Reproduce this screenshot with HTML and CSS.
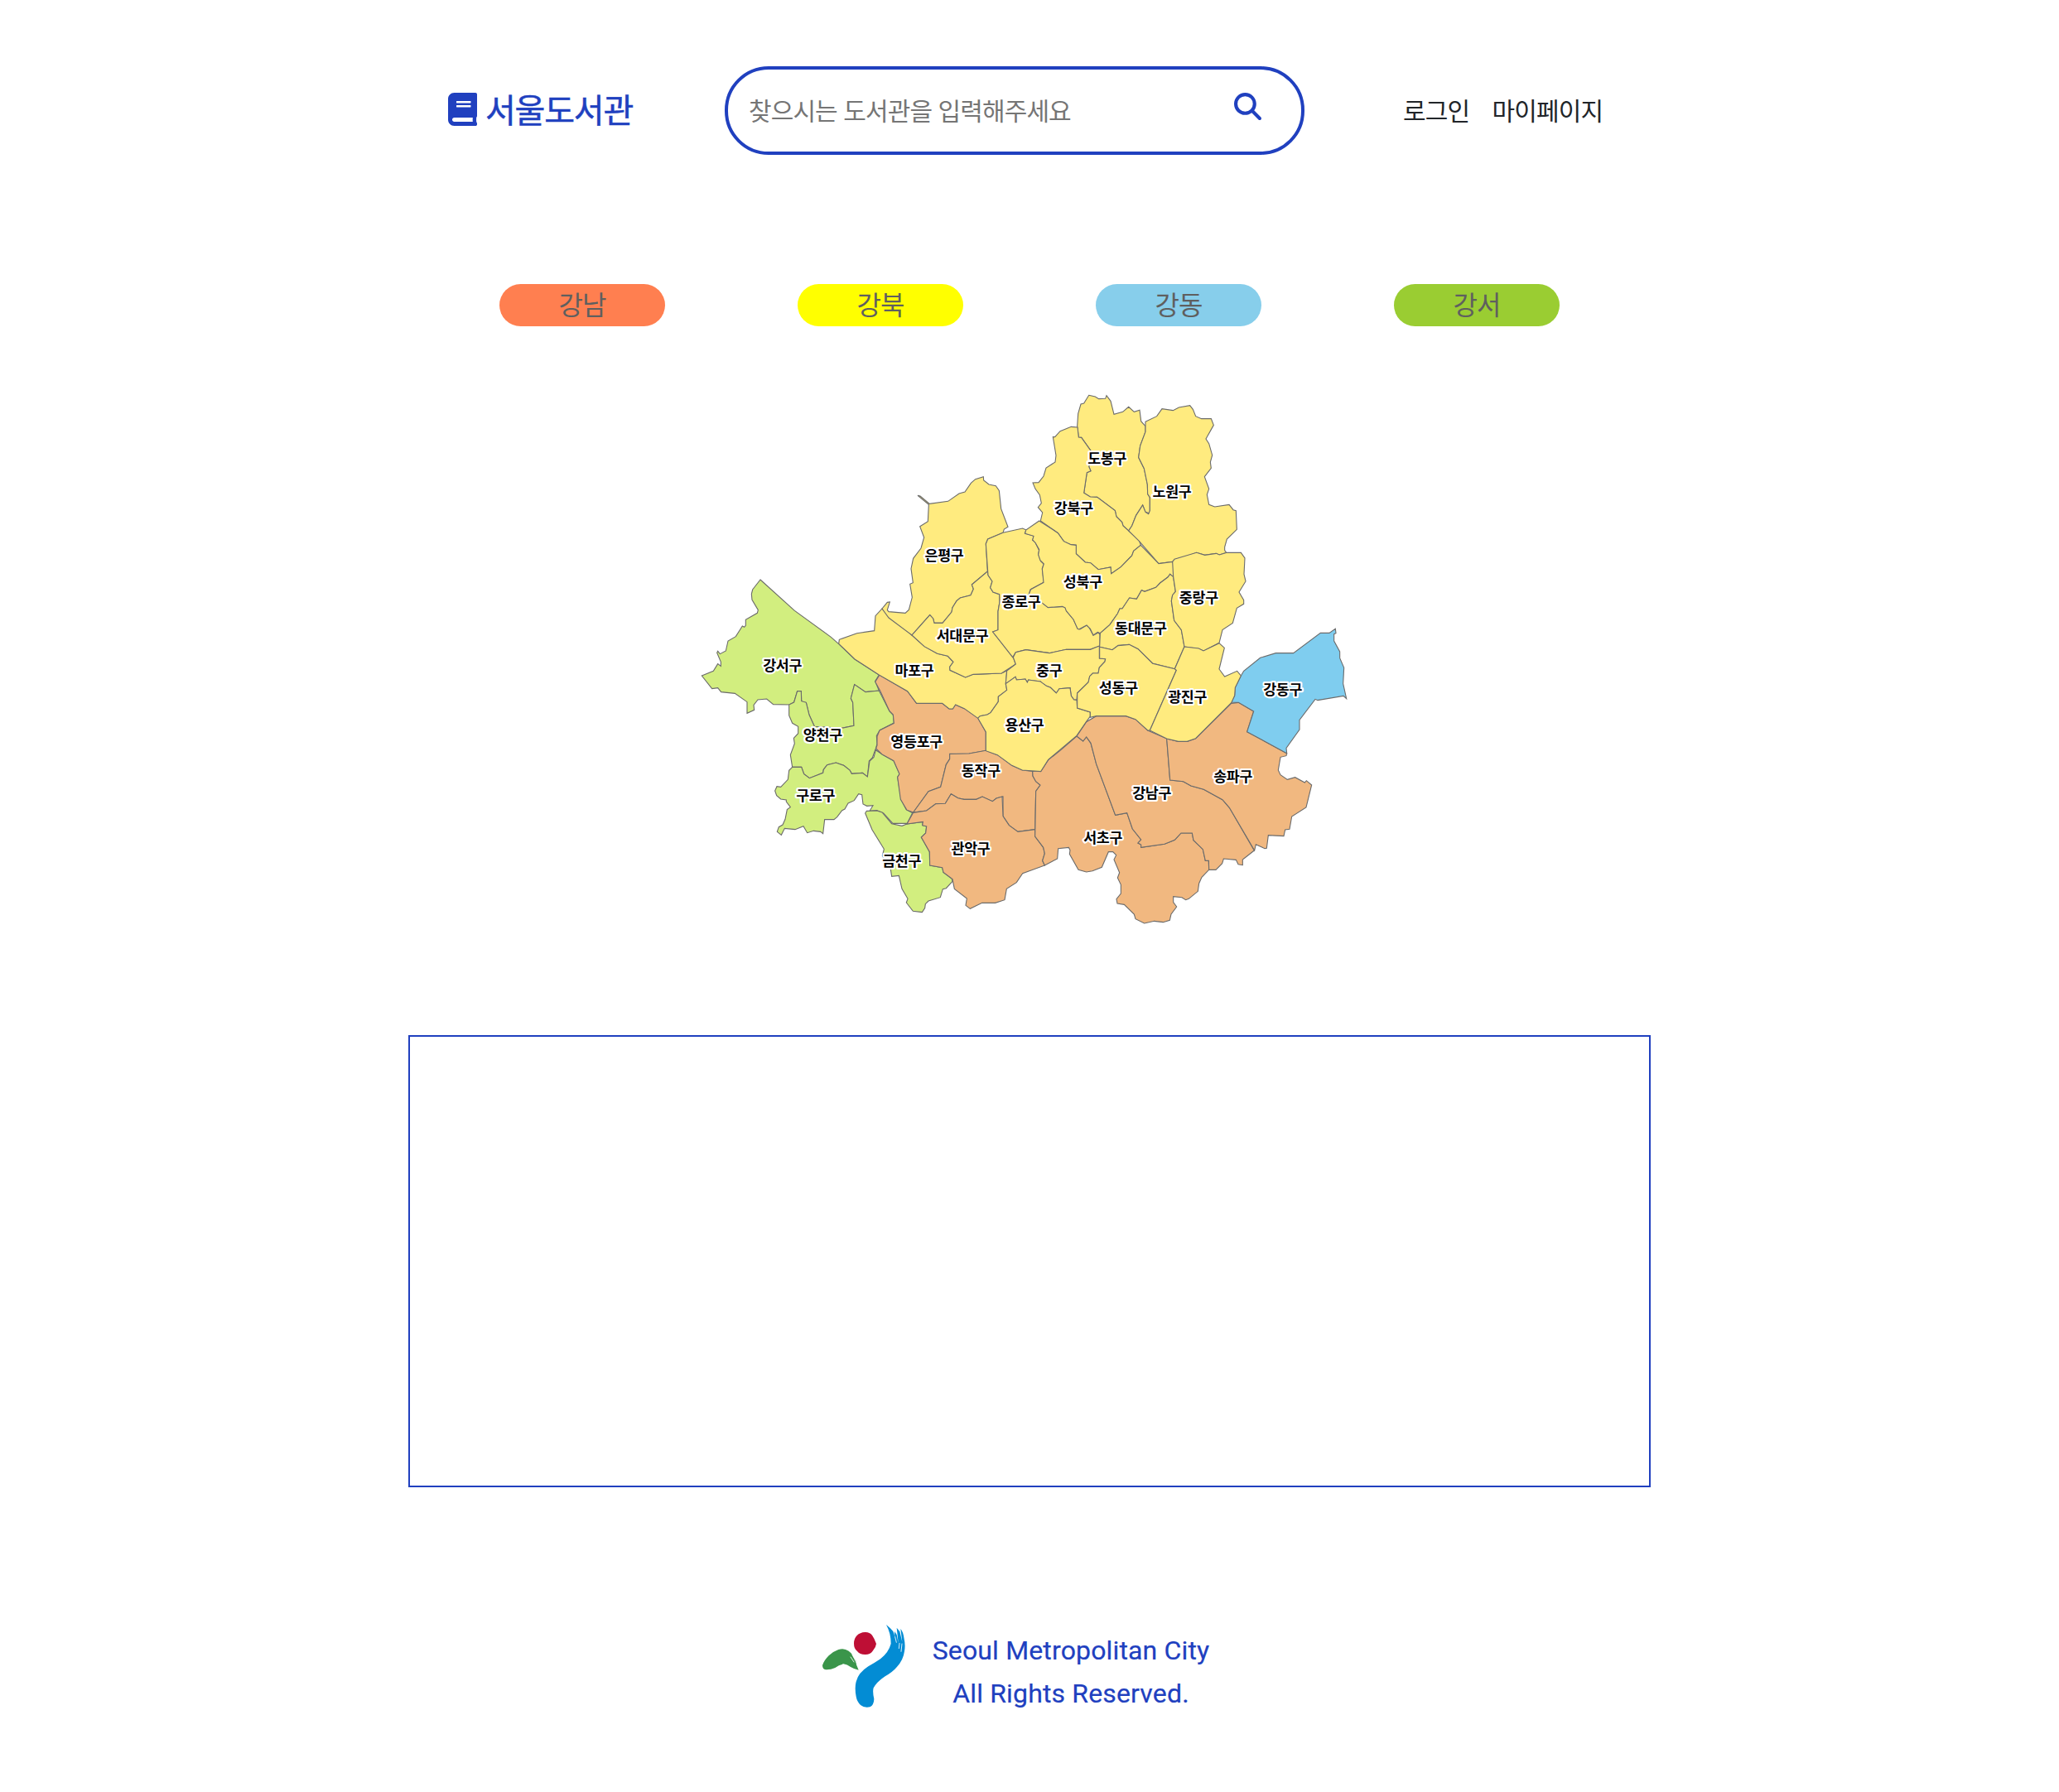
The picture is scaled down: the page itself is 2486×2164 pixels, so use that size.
FILE: index.html
```html
<!DOCTYPE html>
<html lang="ko">
<head>
<meta charset="utf-8">
<title>서울도서관</title>
<link rel="stylesheet" href="styles.css">
</head>
<body>
<header class="header">
  <a class="brand">
    <svg class="brand-icon" viewBox="0 0 448 512"><path fill="currentColor" d="M448 360V24c0-13.300-10.700-24-24-24H96C43 0 0 43 0 96v320c0 53 43 96 96 96h328c13.300 0 24-10.700 24-24v-16c0-7.500-3.500-14.300-8.900-18.700-4.200-15.400-4.200-59.300 0-74.700 5.400-4.300 8.900-11.100 8.900-18.600zM128 134c0-3.300 2.700-6 6-6h212c3.300 0 6 2.700 6 6v20c0 3.300-2.700 6-6 6H134c-3.300 0-6-2.700-6-6v-20zm0 64c0-3.300 2.700-6 6-6h212c3.300 0 6 2.700 6 6v20c0 3.300-2.700 6-6 6H134c-3.300 0-6-2.700-6-6v-20zm253.400 250H96c-17.700 0-32-14.300-32-32 0-17.600 14.400-32 32-32h285.400c-1.900 17.100-1.900 46.900 0 64z"/></svg>
    <span class="brand-name">서울도서관</span>
  </a>
  <div class="search">
    <span class="search-hint">찾으시는 도서관을 입력해주세요</span>
    <svg class="search-icon" viewBox="0 0 512 512"><path fill="currentColor" d="M416 208c0 45.900-14.900 88.300-40 122.700L502.600 457.400c12.500 12.500 12.500 32.800 0 45.300s-32.800 12.500-45.300 0L330.700 376c-34.400 25.200-76.800 40-122.700 40C93.100 416 0 322.900 0 208S93.100 0 208 0S416 93.100 416 208zM208 352a144 144 0 1 0 0-288 144 144 0 1 0 0 288z"/></svg>
  </div>
  <nav class="nav"><a>로그인</a><a>마이페이지</a></nav>
</header>

<main>
  <div class="areas">
    <span class="area area-south">강남</span>
    <span class="area area-north">강북</span>
    <span class="area area-east">강동</span>
    <span class="area area-west">강서</span>
  </div>

  <svg class="map" viewBox="0 0 2400 2010">
    <g class="west" transform="translate(0 660)">
      <path d="M234 60L358 172L490 268L518 293L576 348L664 405L650 428L664 462L615 467L575 440L562 490L569 505L573 589L528 598L430 592L411 550L400 505L383 500L382 464H368L356 504L339 513L281 512L257 492L225 495L210 514L212 532L186 544V503L142 472L92 467L80 452L59 455L22 408L64 391L80 365L91 373V358L77 325L80 319L88 329L109 318L117 282L145 266L169 228L176 232L181 226V205L223 181L226 170L204 133L202 112L206 96Z"/>
      <path d="M368 464H382L383 500L400 505L411 550L430 592L528 598L573 589L569 505L562 490L575 440L615 467L664 462L702 537L715 550L718 579L667 605L655 625L657 655L652 672L640 705L628 717L622 774L604 760L565 763L558 750L536 733L508 723L476 731L463 748L461 760L412 779L392 764L383 739H350L343 695L358 654L355 634L371 617V592L350 580L338 552V513L356 504Z"/>
      <path d="M350 739H383L392 764L412 779L461 760L463 748L476 731L508 723L536 733L558 750L565 763L604 760L622 774L630 717L645 703L652 677L675 692L717 716L739 764L731 775L744 857L762 892L785 905L766 943L714 943L680 906L656 896L630 898L642 878L620 880L606 873L602 839L590 836L574 860L552 870L540 891L530 896L512 920L501 929H467L461 980L452 973L427 970L404 977L390 953L360 965L322 961L310 985L295 973L301 956L315 948L324 928L331 893L343 884L328 864V858L308 855L293 842L287 825L294 809L308 811L334 784L338 751Z"/>
    </g>
    <g class="south" transform="translate(600 1020)">
      <path class="west" d="M14 546L19 538L56 537L75 543L110 584L147 592L165 585L223 577L221 590L236 594L233 618L217 633L247 686L248 735L293 743L297 760L328 784L330 793L307 818L295 821L286 851L243 864L232 875L230 890L220 905L187 901L163 870L168 856L147 820L136 772L110 775L106 750L76 700L82 676L39 606Z"/>
      <path d="M66 45L167 104L200 148H293L318 168H331L341 153L373 167L422 200L451 252V320L390 330L320 332L320 350L307 370L287 451L243 467L188 543L165 535L142 496L131 415L138 404L117 356L75 333L53 312L57 300V268L66 246L118 220L115 189L102 176L68 103L50 70Z"/>
      <path d="M188 543L243 467L287 451L307 370L320 350V331L390 330L451 319L493 335L545 373L583 390L620 394L621 411L632 431L648 444L632 466L629 605L567 613L535 590L513 557V486L489 492L475 503L438 486L416 496H372L350 491L325 476L304 511L270 512L236 537Z"/>
      <path d="M165 585L188 544L236 537L270 512L304 511L325 476L350 491L372 496H416L438 486L475 503L489 492L510 486L513 557L535 590L567 613L629 605V630L659 670L664 692L656 718L664 735L584 764L562 797L526 820L519 860L485 871H437L394 892L378 880L382 855L337 820L330 785L297 760L293 743L248 735L247 686L217 633L233 618L236 594L221 590L223 577Z"/>
    </g>
    <g class="south" transform="translate(1320 840)">
      <path d="M60 447L83 465L95 450L111 472L131 548L200 733L242 725L262 783L293 822L282 834L293 840V850L378 838L415 823L438 798H478L483 824L517 857L526 898H538L539 931L513 958L503 980L499 1009L466 1036L455 1040L441 1031L410 1028V1049L422 1065L402 1092L397 1114L373 1121L341 1117L305 1125L273 1109L268 1092L232 1057L207 1053L204 1037L220 1017V985L208 960L215 941L195 894L203 878L191 866H175L151 922L117 935L95 939L66 931L34 874L36 860L31 850L-7 854L-10 891L-56 915L-64 898L-56 872L-61 850L-91 810L-88 646L-72 624L-88 611L-99 591L-100 574H-70L-43 533L0 499Z"/>
      <path d="M60 447L95 395L131 374H238L273 386L317 426L386 456L398 606L446 611L474 627L520 640L588 677L613 706L703 861L661 894V914L645 911L637 895L592 891L587 908L564 931H539L538 898H526L517 857L483 824L478 798H438L415 823L378 838L293 850V840L282 834L293 822L262 783L242 725L200 733L131 548L111 472L95 450L83 465Z"/>
      <path d="M386 456L428 466H460L491 455L620 328L646 325L701 357L677 431L821 509L819 518L798 523L790 570L798 587L823 604L851 596L886 615L892 608L911 624L891 705L839 738L831 784L815 786L810 809L754 806L748 853L741 854L709 839L704 861L613 706L588 677L520 640L474 627L446 611L398 606Z"/>
      <path class="east" d="M620 324L632 300L634 271L655 228L665 211L725 163L781 146H845L943 73H975L997 58L999 74L992 77V102L1013 141V164L1028 199L1025 257L1037 311L1026 301L933 317L924 313L867 388V423L819 490L821 509L677 431L701 357L646 325Z"/>
    </g>
    <g class="north" transform="translate(600 300)">
      <path d="M-82 652L-80 637L-16 614L47 605L51 551L75 525L99 548L183 621L228 662L275 688L313 697L333 718L320 736L321 748L377 774L405 763L508 759L527 750L523 796L527 820L496 844V862L468 902L456 909L430 914L422 922L373 887L341 873L331 888H318L293 868H200L167 824L64 765L-24 708Z"/>
      <path d="M204 115L213 117L247 145L314 136L354 108L375 102L397 70L413 56L442 47L443 60L462 75L487 80L499 97L506 163L531 229L517 237L513 250L458 273L451 290L457 390L400 438L406 454L396 476L358 486L345 497L330 521L327 537L294 577H264L260 561L248 548L183 621L99 558L75 525L94 502L103 501L94 530L99 536L159 541L172 529L184 484L176 436L187 431L180 380L188 343L216 306L227 267L212 227L241 209L244 148Z"/>
      <path d="M457 390L459 404L474 426L467 449L477 465L500 473L501 500L495 535V602L476 609L550 701L559 726L508 759L405 763L377 774L321 748L320 736L333 718L313 697L275 688L228 662L183 621L248 548L260 561L264 577H294L327 537L330 521L345 497L358 486L396 476L406 454L400 438Z"/>
      <path d="M458 273L513 250L584 234L597 240L592 252L625 262L620 277L628 281L644 314L641 327L650 354L661 363L655 380L661 430L612 456L605 480L656 505L676 520L737 517L744 535L768 564L784 598L792 600L816 585L825 593L840 622L858 612L864 618V660L829 673H742L681 686L596 674L559 683L548 701L476 609L495 602V535L501 500L500 473L477 465L467 449L474 426L459 404L451 290Z"/>
      <path d="M550 701L559 683L596 674L681 686L742 673H829L862 660V705L884 707L882 717L862 738L858 759H838L827 770L822 792L782 831L780 855H770L760 841L756 812L717 815L706 831L685 811L670 805L662 799H655L649 789L605 783L601 792L594 780L562 783L558 772L523 797L527 750L559 726Z"/>
      <path d="M422 922L430 914L456 909L468 902L496 862V844L527 820L523 797L558 772L562 783L594 780L601 792L605 783L649 789L670 805L685 811L706 831L717 815L756 812L760 841L770 855L780 856L782 885L829 900V915L815 934L780 985L677 1072L650 1115L583 1110L545 1093L493 1055L451 1040V972Z"/>
    </g>
    <g class="north" transform="translate(1140 0)">
      <path d="M284 52L307 57L320 65L344 64L348 53L363 73L375 121L407 112L428 94L448 112L468 106L473 146L489 164V184L470 235L464 277L484 317L496 375L497 410L505 422V480L489 475L479 450L455 487L440 525L428 543L408 525L404 512L384 492L379 470L314 421L289 420L266 406L277 332L291 326L284 310L296 260L257 205L247 204L242 165L245 119L255 84L266 81Z"/>
      <path d="M154 203L161 203L180 182L220 166L243 168L247 204L257 205L296 260L284 310L291 326L277 332L266 406L289 420L314 421L379 470L384 492L404 512L408 525L466 577L472 595L446 616L440 633L400 674L365 698L363 675L318 683L290 659L271 657L238 626V595L219 593L193 581L172 551L109 507L116 477L100 458L112 443L106 413L90 391L81 369L102 368L120 345L129 315L162 294L165 270Z"/>
      <path d="M489 148L530 128L549 101L589 107L610 96L650 89L661 103L671 128L692 137H727L736 160L708 210L719 227L731 269L724 294L727 316L703 347L719 391L712 412L719 448L740 456L792 448L807 467L817 470L820 538L784 573L776 602V614L782 622L757 630L745 625L704 631L674 622L587 655L537 662L466 580L428 543L440 525L455 487L479 450L489 475L500 482L505 470V422L497 410L496 375L484 317L464 277L470 235L489 184Z"/>
      <path d="M104 507L172 551L193 581L219 593L238 595V626L271 657L290 659L318 683L363 675L365 698L400 674L440 633L446 616L472 595L537 662L587 655L593 670L590 710L578 700L570 711L542 732L527 748L486 763L475 758L457 790L431 786L405 825H396L388 843L360 883L325 914L316 910L300 921L289 898L276 885L248 900L243 898L228 864L202 833L198 822L188 817L136 821L116 805L66 775L74 755L120 730L115 681L121 663L108 650L101 630L104 611L90 586L80 576L84 562L53 553L56 540Z"/>
      <path d="M325 914L360 883L388 843L396 825H405L431 786L457 790L475 758L486 763L527 748L542 732L570 711L578 700L590 710L598 763L587 776L583 797L593 868L619 902L630 962L595 1043L515 1023L462 971L430 955L390 958L369 974L323 964Z"/>
      <path d="M587 655L594 646L674 622L704 631L745 625L757 630L784 622H835L849 642L846 700L852 726L828 765L845 794V808L820 823L805 877L768 902L756 949L700 978L680 970L630 963L619 902L593 868L583 797L587 776L598 763L590 710Z"/>
    </g>
    <g class="north" transform="translate(1320 840)">
      <path d="M143 124L189 134L210 119L250 115L282 131L335 184L415 203L421 208L325 426L317 426L273 386L238 374H131L109 379V360L62 345V291L102 252L107 230L118 219H138L142 198L162 177L164 167L143 165Z"/>
      <path d="M450 123L502 129L519 138L576 110L595 127L576 204L596 231L641 211L655 228L634 271L632 300L620 326L491 455L460 466H428L386 456L325 426L421 208L415 203Z"/>
    </g>
    <g class="names">
      <text x="1490" y="301">도봉구</text><text x="1725" y="419">노원구</text>
      <text x="1369" y="480">강북구</text><text x="1402" y="747">성북구</text>
      <text x="1822" y="804">중랑구</text><text x="1612" y="914">동대문구</text>
      <text x="900" y="650">은평구</text><text x="1179" y="819">종로구</text>
      <text x="966" y="942">서대문구</text><text x="792" y="1067">마포구</text>
      <text x="1280" y="1067">중구</text><text x="1531" y="1132">성동구</text>
      <text x="1781" y="1165">광진구</text><text x="2126" y="1137">강동구</text>
      <text x="1191" y="1265">용산구</text><text x="314" y="1050">강서구</text>
      <text x="460" y="1302">양천구</text><text x="434" y="1520">구로구</text>
      <text x="746" y="1759">금천구</text><text x="800" y="1325">영등포구</text>
      <text x="1033" y="1431">동작구</text><text x="996" y="1714">관악구</text>
      <text x="1475" y="1673">서초구</text><text x="1652" y="1513">강남구</text>
      <text x="1946" y="1452">송파구</text>
    </g>
  </svg>

  <section class="panel"></section>
</main>

<footer class="footer">
  <svg class="city-mark" viewBox="24 36 300 300">
    <path fill="#be0f35" d="M178 63Q194 62 204 74Q212 85 219 105Q218 118 206 131Q196 145 178 144Q159 144 150 132Q138 123 138 104Q138 86 149 75Q160 64 178 63Z"/>
    <path fill="#3a954a" d="M24 183Q30 165 47 148Q62 133 82 126Q102 119 119 131L129 140L133 149L146 168L147 181L155 200Q137 196 126 189Q114 180 100 178Q83 182 70 192Q53 200 36 199Q24 197 24 183Z"/>
    <path fill="#038cd4" d="M255 36L269 48L280 60Q285 69 286 82L285 60L293 72L299 103L293 47L304 61L313 98L307 51Q317 62 320 88Q325 110 321 132Q317 164 293 190Q279 207 251 223Q218 246 209 265Q205 278 211 305Q210 328 196 334Q177 339 162 327Q149 314 146 296Q140 265 146 242Q154 210 190 187Q215 173 234 160Q264 136 272 105Q272 66 255 36Z"/>
    <path class="brush" d="M126 153L138 171M136 151L149 178M287 80L292 100M303 103L301 122M312 105L309 133M296 43L300 48"/>
  </svg>
  <p class="copyright">Seoul Metropolitan City<br>All Rights Reserved.</p>
</footer>
</body>
</html>
```
FILE: styles.css
```css
* { box-sizing: border-box; }
body {
  margin: 0;
  background: #fff;
  color: #212529;
  font-family: "Noto Sans CJK KR", sans-serif;
}
.header {
  display: flex;
  align-items: center;
  width: 1500px;
  height: 267px;
  margin: 0 auto;
  padding: 0 48px;
}
.brand { display: flex; align-items: center; gap: 10px; width: 334px; padding-bottom: 3px; color: #2040bf; }
.brand-icon { width: 35px; height: 40px; }
.brand-name {
  font-size: 40px;
  letter-spacing: -1.2px;
  line-height: 40px;
  padding-bottom: 2px;
  -webkit-text-stroke: .5px currentColor;
}
.search {
  display: flex;
  align-items: center;
  justify-content: space-between;
  width: 700px;
  height: 107px;
  padding: 0 48px 0 25px;
  border: 4px solid #2040bf;
  border-radius: 53px;
  color: #2040bf;
}
.search-hint { padding-bottom: 4px; color: #757575; font-size: 30px; letter-spacing: -.9px; }
.search-icon { width: 33px; height: 33px; margin-bottom: 10px; }
.nav {
  display: flex;
  gap: 27px;
  margin-left: 119px;
  padding-bottom: 4px;
  font-size: 30px;
  letter-spacing: -.8px;
  white-space: nowrap;
}
.areas { display: flex; justify-content: center; gap: 160px; padding-top: 76px; }
.area {
  width: 200px;
  height: 51px;
  border-radius: 26px;
  color: #5f5f5f;
  font-size: 32px;
  line-height: 47px;
  letter-spacing: -1px;
  text-align: center;
}
.area-south { background: coral; }
.area-north { background: yellow; }
.area-east { background: skyblue; }
.area-west { background: yellowgreen; }
.map { display: block; width: 800px; height: 670px; margin: 66px 0 0 840px; }
.map path { stroke: #6b6b6b; stroke-width: 3.3; }
.north { fill: #ffeb7f; }
.south { fill: #f1b880; }
.west { fill: #d2ee7f; }
.east { fill: #7fcdef; }
.names {
  fill: #000;
  stroke: #fff;
  stroke-width: 13;
  stroke-linejoin: round;
  paint-order: stroke;
  font-size: 52px;
  font-weight: 700;
  letter-spacing: -.8px;
  text-anchor: middle;
}
.panel { width: 1500px; height: 546px; margin: 120px auto 0; border: 2px solid #2040bf; }
.footer { display: flex; width: 1500px; margin: 166px auto 0; padding-left: 500px; }
.city-mark { width: 100px; height: 100px; overflow: visible; }
.brush { fill: none; stroke: #fff; stroke-width: 2.5; stroke-linecap: round; }
.copyright {
  width: 340px;
  margin: 5px 0 0 30px;
  color: #2040bf;
  font-family: Roboto, sans-serif;
  font-size: 32px;
  letter-spacing: .15px;
  line-height: 52px;
  text-align: center;
  white-space: nowrap;
  -webkit-text-stroke: .2px currentColor;
}
```
